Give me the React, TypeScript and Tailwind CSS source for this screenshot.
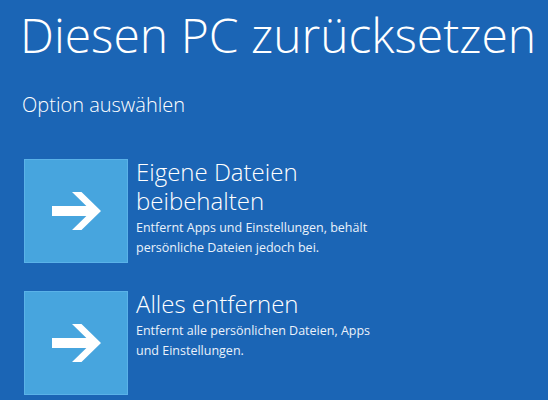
const Arrow = () => (
  <svg width="49" height="38" viewBox="0 0 49 38" fill="#ffffff">
    <rect x="0" y="14" width="40" height="10" />
    <polygon points="20,0 29.5,0 49,19 29.5,38 20,38 39.5,19" />
  </svg>
);

type OptionProps = {
  title: string[];
  desc: string[];
};

const Option = ({ title, desc }: OptionProps) => (
  <div className="flex items-start">
    <div className="w-[104px] h-[104px] bg-[#47a5de] border border-[#5ab2e8] flex items-center justify-center shrink-0">
      <Arrow />
    </div>
    <div className="ml-[8px] mt-[-2px] text-white">
      <div className="text-[24px] leading-[29px] font-light">
        {title.map((t) => (
          <div key={t}>{t}</div>
        ))}
      </div>
      <div className="text-[12.5px] leading-[20px] mt-[3px] text-[#eaf2fb]">
        {desc.map((d) => (
          <div key={d}>{d}</div>
        ))}
      </div>
    </div>
  </div>
);

export default function App() {
  return (
    <div
      className="w-[548px] h-[400px] overflow-hidden bg-[#1b65b5] text-white"
      style={{ fontFamily: '"Open Sans", "Noto Sans", sans-serif' }}
    >
      <h1 className="pl-[20px] pt-[7px] text-[48px] leading-[56px] font-light whitespace-nowrap">
        Diesen PC zurücksetzen
      </h1>
      <div className="pl-[22px] mt-[29px] text-[20px] leading-[26px] font-light">
        Option auswählen
      </div>
      <div className="pl-[24px] mt-[41px] flex flex-col gap-[28px]">
        <Option
          title={["Eigene Dateien", "beibehalten"]}
          desc={["Entfernt Apps und Einstellungen, behält", "persönliche Dateien jedoch bei."]}
        />
        <Option
          title={["Alles entfernen"]}
          desc={["Entfernt alle persönlichen Dateien, Apps", "und Einstellungen."]}
        />
      </div>
    </div>
  );
}
